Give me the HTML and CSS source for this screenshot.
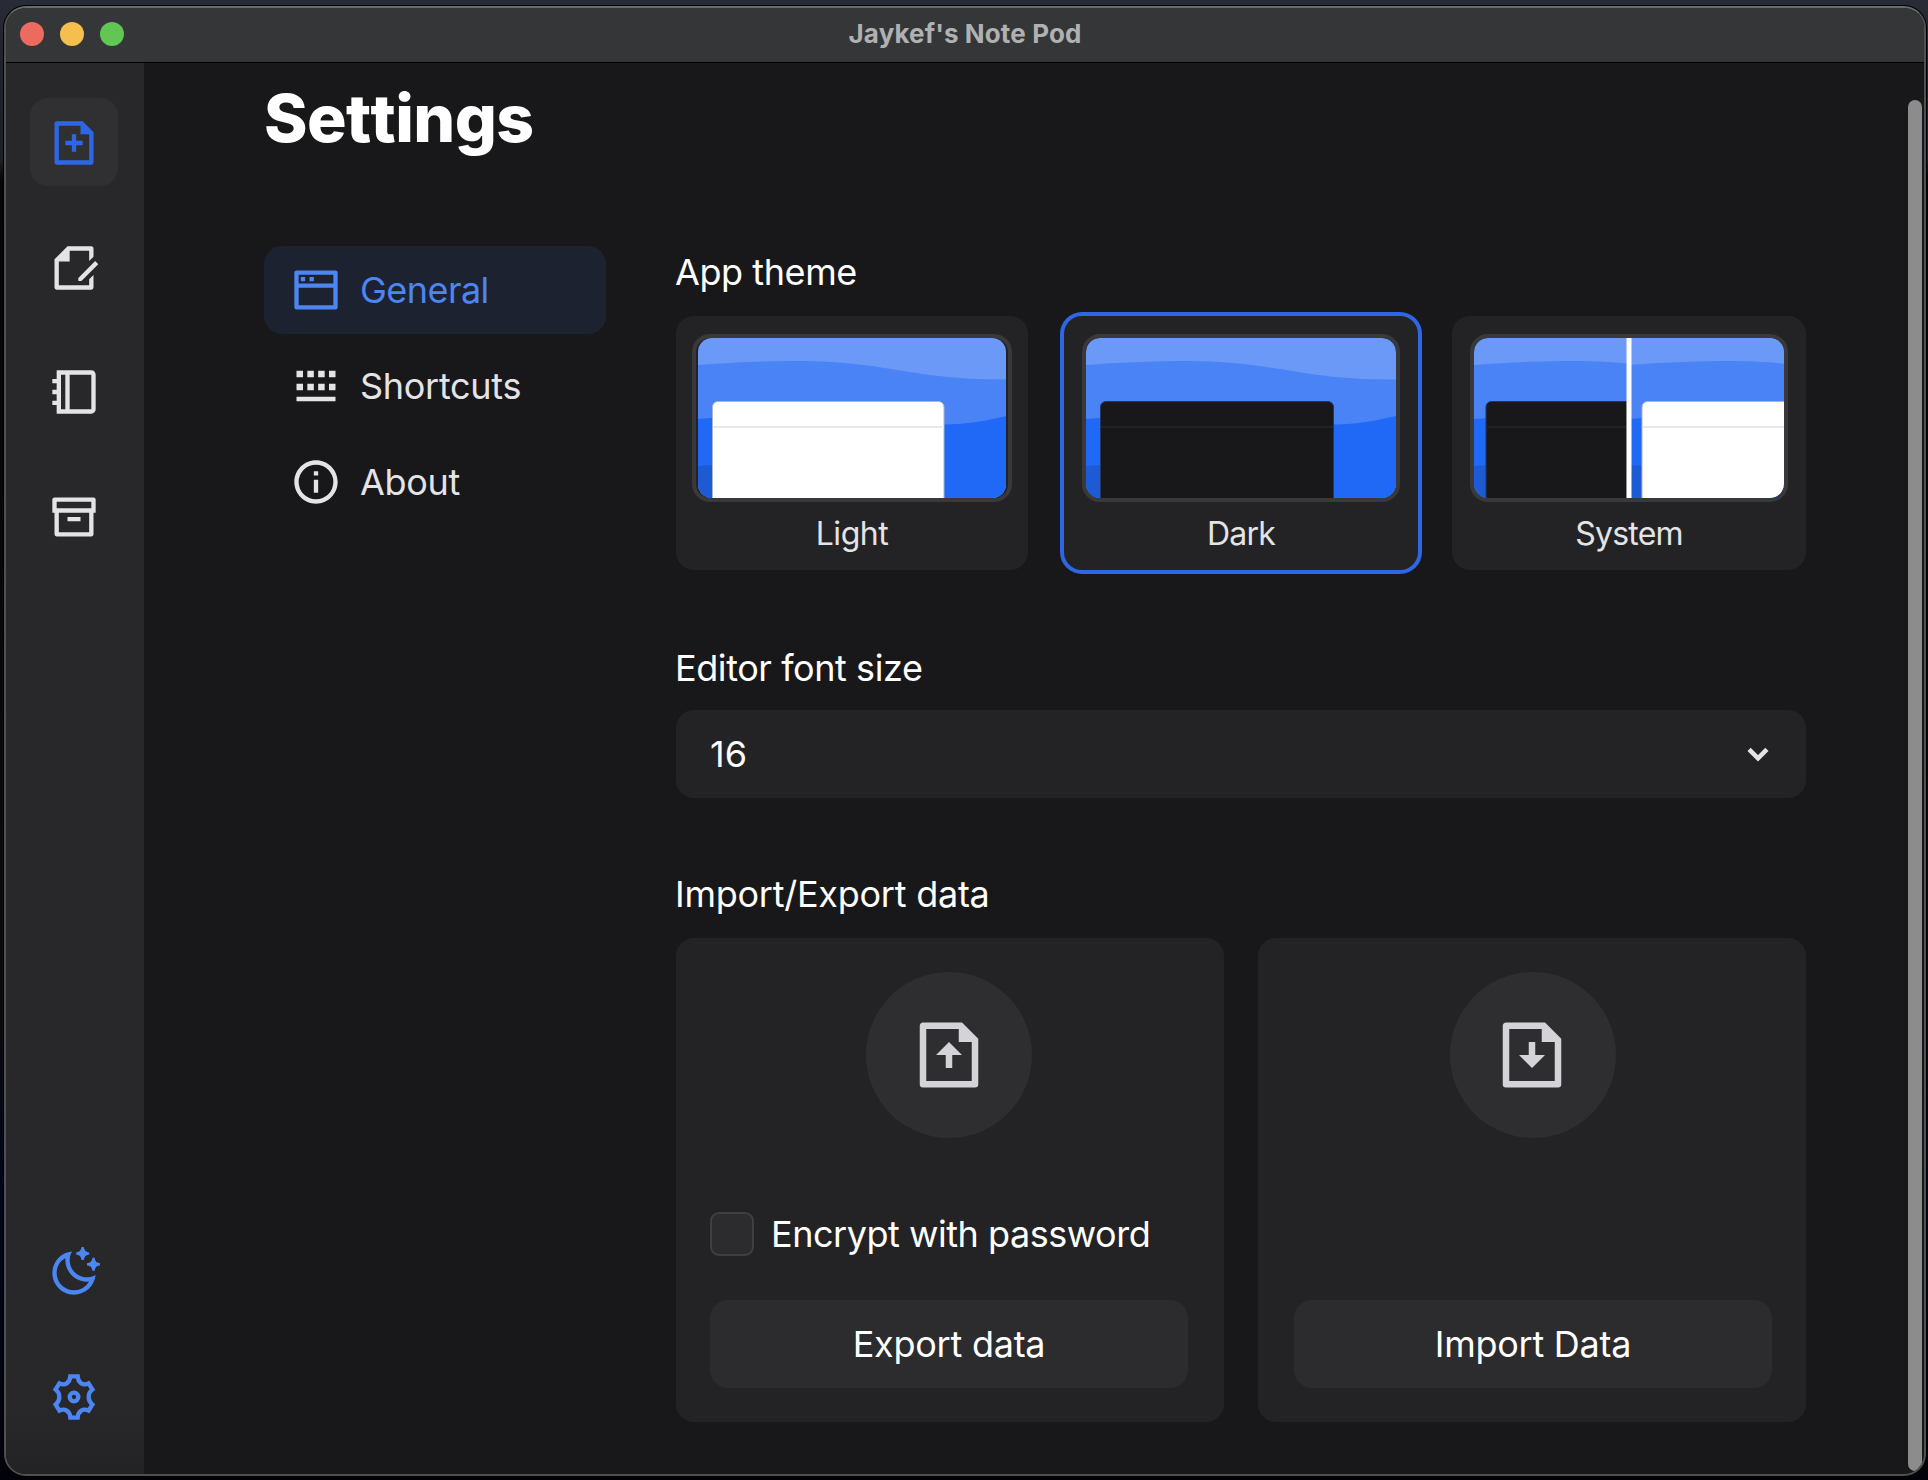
FILE: index.html
```html
<!DOCTYPE html>
<html lang="en">
<head>
<meta charset="utf-8">
<title>Jaykef's Note Pod</title>
<link rel="stylesheet" href="styles.css">
</head>
<body>
<svg width="0" height="0" class="defs">
  <defs>
    <symbol id="wall" viewBox="0 0 310 160" preserveAspectRatio="none">
      <rect width="310" height="160" fill="#6b99f7"/>
      <path d="M0 27C40 24 75 23 100 23C190 23 215 42 310 41.500V160H0Z" fill="#4a83f6"/>
      <path d="M0 81C60 75 160 86 245 86.500C275 86.500 292 82 310 78V160H0Z" fill="#2069f6"/>
      <path d="M0 128C20 126 40 127 60 132V160H0Z" fill="#1c5bd3"/>
    </symbol>
  </defs>
</svg>
<div class="window">
  <header class="titlebar">
    <div class="lights"><i class="light red"></i><i class="light yellow"></i><i class="light green"></i></div>
    <h1 class="app-title">Jaykef's Note Pod</h1>
  </header>
  <div class="body">
    <nav class="sidebar">
      <a class="side-btn active"><svg class="icon" viewBox="0 0 24 24"><path d="M15 4H5v16h14V8h-4V4zM3 2.992C3 2.444 3.447 2 3.999 2H16l5 5v13.993A1 1 0 0 1 20.007 22H3.993A1 1 0 0 1 3 21.008V2.992zM11 11V8h2v3h3v2h-3v3h-2v-3H8v-2h3z"/></svg></a>
      <a class="side-btn"><svg class="icon" viewBox="0 0 24 24"><path d="M20 2c.552 0 1 .448 1 1v3.757l-2 2V4h-9v5H5v11h14v-2.757l2-2v5.765a.993.993 0 0 1-.993.992H3.993A1 1 0 0 1 3 20.993V8l6.003-6H20zm1.778 6.808l1.414 1.414L15.414 18l-1.416-.002.002-1.412 7.778-7.778z"/></svg></a>
      <a class="side-btn"><svg class="icon" viewBox="0 0 24 24"><path d="M4 2h16.005C21.107 2 22 2.898 22 3.990v16.020c0 1.099-.893 1.990-1.995 1.990H4v-4H2v-2h2v-3H2v-2h2V8H2V6h2V2zm4 2H6v16h2V4zm2 16h10V4H10v16z"/></svg></a>
      <a class="side-btn"><svg class="icon" viewBox="0 0 24 24"><path d="M3 10H2V4.003C2 3.449 2.455 3 2.992 3h18.016A.990.990 0 0 1 22 4.003V10h-1v10.001a.996.996 0 0 1-.993.999H3.993A.996.996 0 0 1 3 20.001V10zm16 0H5v9h14v-9zM4 5v3h16V5H4zm5 7h6v2H9v-2z"/></svg></a>
      <span class="spacer"></span>
      <a class="side-btn blue"><svg class="icon" viewBox="0 0 24 24"><path d="M10 6a8 8 0 0 0 11.955 6.956C21.474 18.030 17.200 22 12 22 6.477 22 2 17.523 2 12c0-5.200 3.970-9.474 9.044-9.955A7.963 7.963 0 0 0 10 6zm-6 6a8 8 0 0 0 8 8 8.006 8.006 0 0 0 6.957-4.045c-.316.030-.636.045-.957.045-5.523 0-10-4.477-10-10 0-.321.015-.640.045-.957A8.006 8.006 0 0 0 4 12zm14.164-9.709L19 2.500v1l-.836.209a2 2 0 0 0-1.455 1.455L16.500 6h-1l-.209-.836a2 2 0 0 0-1.455-1.455L13 3.500v-1l.836-.209A2 2 0 0 0 15.290.836L15.500 0h1l.209.836a2 2 0 0 0 1.455 1.455zm5 5L24 7.500v1l-.836.209a2 2 0 0 0-1.455 1.455L21.500 11h-1l-.209-.836a2 2 0 0 0-1.455-1.455L18 8.500v-1l.836-.209a2 2 0 0 0 1.455-1.455L20.500 5h1l.209.836a2 2 0 0 0 1.455 1.455z"/></svg></a>
      <a class="side-btn blue"><svg class="icon" viewBox="0 0 24 24"><path d="M10.300 2.500H13.700C13.900 5.500 16.200 6.900 18.700 5.700L20.500 8.500C18.200 10.300 18.200 13.700 20.500 15.500L18.700 18.300C16.200 17.100 13.900 18.500 13.700 21.500H10.300C10.100 18.500 7.800 17.100 5.300 18.300L3.500 15.500C5.800 13.700 5.800 10.300 3.500 8.500L5.300 5.700C7.800 6.900 10.100 5.500 10.300 2.500Z" class="line"/><circle cx="12" cy="12" r="2" class="line"/></svg></a>
    </nav>
    <main class="content">
      <h2 class="page-title">Settings</h2>
      <div class="columns">
        <nav class="tabs">
          <a class="tab selected"><svg class="icon" viewBox="0 0 24 24"><path d="M21 3a1 1 0 0 1 1 1v16a1 1 0 0 1-1 1H3a1 1 0 0 1-1-1V4a1 1 0 0 1 1-1h18zm-1 8H4v8h16v-8zm0-6H4v4h16V5zM5 6h2v2H5V6zm4 0h2v2H9V6z"/></svg><span class="tab-general">General</span></a>
          <a class="tab"><svg class="icon" viewBox="0 0 24 24"><path d="M3 17h18v2H3v-2zm0-6h3v3H3v-3zm5 0h3v3H8v-3zM3 5h3v3H3V5zm10 0h3v3h-3V5zm5 0h3v3h-3V5zm-5 6h3v3h-3v-3zm5 0h3v3h-3v-3zM8 5h3v3H8V5z"/></svg>Shortcuts</a>
          <a class="tab"><svg class="icon" viewBox="0 0 24 24"><path d="M12 22C6.477 22 2 17.523 2 12S6.477 2 12 2s10 4.477 10 10-4.477 10-10 10zm0-2a8 8 0 1 0 0-16 8 8 0 0 0 0 16zM11 7h2v2h-2V7zm0 4h2v6h-2v-6z"/></svg>About</a>
        </nav>
        <div class="panel">
          <section class="theme-section">
            <h3 class="label">App theme</h3>
            <div class="themes">
              <div class="theme light-theme">
                <div class="frame inset"><svg class="preview" viewBox="0 0 308 160" preserveAspectRatio="none"><use href="#wall" width="308" height="160"/><path d="M14.500 160V69a5.500 5.500 0 0 1 5.500-5.500H240.500a5.500 5.500 0 0 1 5.500 5.500V160" fill="#fff" stroke="#a9b6cf" stroke-width="1"/><path d="M15 89H246" stroke="#e9e9e9" stroke-width="2"/></svg></div>
                <span>Light</span>
              </div>
              <div class="theme chosen">
                <div class="frame"><svg class="preview" viewBox="0 0 310 160" preserveAspectRatio="none"><use href="#wall" width="310" height="160"/><path d="M14.500 160V69a5.500 5.500 0 0 1 5.500-5.500H242a5.500 5.500 0 0 1 5.500 5.500V160" fill="#18181a" stroke="#27365a" stroke-width="1"/><path d="M15 89H247" stroke="#232325" stroke-width="2"/></svg></div>
                <span>Dark</span>
              </div>
              <div class="theme">
                <div class="frame"><svg class="preview" viewBox="0 0 310 160" preserveAspectRatio="none"><use href="#wall" width="310" height="160"/><path d="M12 160V69a5.500 5.500 0 0 1 5.500-5.500H153V160" fill="#18181a" stroke="#27365a" stroke-width="1"/><path d="M12 89H153" stroke="#232325" stroke-width="2"/><svg x="155" width="155" height="160"><use href="#wall" width="310" height="160"/><path d="M13 160V69a5.500 5.500 0 0 1 5.500-5.500H160V160" fill="#fff" stroke="#a9b6cf" stroke-width="1"/><path d="M13.500 89H155" stroke="#e9e9e9" stroke-width="2"/></svg><path d="M155 0V160" stroke="#fff" stroke-width="5"/></svg></div>
                <span>System</span>
              </div>
            </div>
          </section>
          <section class="font-section">
            <h3 class="label">Editor font size</h3>
            <div class="select"><span>16</span><svg class="chevron" viewBox="0 0 24 24"><path d="M3.100 7.400L12 16.300L20.900 7.400"/></svg></div>
          </section>
          <section class="data-section">
            <h3 class="label data-label">Import/Export data</h3>
            <div class="cards">
              <div class="card export">
                <div class="disc"><svg class="doc" viewBox="0 0 24 24"><path d="M15 4H5v16h14V8h-4V4zM3 2.992C3 2.444 3.447 2 3.999 2H16l5 5v13.993A1 1 0 0 1 20.007 22H3.993A1 1 0 0 1 3 21.008V2.992zM13 12v4h-2v-4H8l4-4 4 4h-3z"/></svg></div>
                <label class="check"><i class="box"></i>Encrypt with password</label>
                <div class="button">Export data</div>
              </div>
              <div class="card import">
                <div class="disc"><svg class="doc" viewBox="0 0 24 24"><path d="M15 4H5v16h14V8h-4V4zM3 2.992C3 2.444 3.447 2 3.999 2H16l5 5v13.993A1 1 0 0 1 20.007 22H3.993A1 1 0 0 1 3 21.008V2.992zM13 12h3l-4 4-4-4h3V8h2v4z"/></svg></div>
                <div class="button">Import Data</div>
              </div>
            </div>
          </section>
        </div>
      </div>
    </main>
    <div class="scroll"><div class="thumb"></div></div>
  </div>
</div>
</body>
</html>
```

FILE: styles.css
```css
* { box-sizing: border-box; }
body {
  margin: 0;
  width: 1928px;
  height: 1480px;
  padding: 6px 2px 4px 4px;
  overflow: hidden;
  background: linear-gradient(#292b36 0, #20232b 60px, #1c2024 160px, #050505 180px, #0a0a0c 1000px, #020617 1180px, #02030a 1480px);
  font-family: Inter, "Liberation Sans", sans-serif;
  color: #fff;
}
h1, h2, h3 { margin: 0; }
.defs { position: absolute; }
.window {
  width: 1922px;
  height: 1470px;
  border: 2px solid #505052;
  border-top-color: #6a6b6e;
  border-radius: 22px;
  overflow: hidden;
  box-shadow: 0 0 0 1px #000;
  background: #18181a;
  display: flex;
  flex-direction: column;
}
.titlebar {
  height: 55px;
  flex: none;
  background: #353638;
  border-bottom: 1px solid #000;
  display: grid;
  grid-template-columns: 1fr auto 1fr;
  align-items: center;
}
.lights { display: flex; gap: 16px; padding: 0 0 2px 14px; }
.light { width: 24px; height: 24px; border-radius: 50%; }
.red { background: #ed6a5f; }
.yellow { background: #f5bf50; }
.green { background: #62c655; }
.app-title { font-size: 26px; line-height: 30px; font-weight: 700; color: #b0b1b2; padding-bottom: 3px; letter-spacing: 0.12px; }
.body { flex: 1; display: flex; min-height: 0; }
.sidebar {
  width: 138px;
  flex: none;
  background: linear-gradient(#28282a 95%, #232325);
  display: flex;
  flex-direction: column;
  align-items: center;
  padding: 35px 2px 34px 0;
  gap: 36.5px;
}
.side-btn {
  width: 88px;
  height: 88px;
  border-radius: 18px;
  padding-top: 2px;
  display: flex;
  align-items: center;
  justify-content: center;
  color: #e4e4e7;
}
.side-btn.active { background: #303032; color: #2f66e6; }
.side-btn.blue, .selected { color: #4c86f2; }
.spacer { flex: 1; }
.icon { width: 52px; height: 52px; fill: currentColor; flex: none; }
.line { fill: none; stroke: currentColor; stroke-width: 2; }
.content { width: 1764px; flex: none; padding: 19px 102px 0 120px; }
.page-title { font-size: 66px; line-height: 72px; font-weight: 800; font-kerning: none; font-feature-settings: "calt" 0; letter-spacing: -0.6px; }
.columns { display: flex; gap: 70px; padding-top: 92px; }
.tabs { width: 342px; flex: none; display: flex; flex-direction: column; gap: 8px; }
.tab {
  height: 88px;
  border-radius: 18px;
  padding: 0 0 1px 26px;
  display: flex;
  align-items: center;
  gap: 18px;
  font-size: 36px;
  letter-spacing: -0.3px;
  color: #e4e4e7;
}
.tab-general { letter-spacing: -0.55px; }
.tab.selected { background: #1d2230; color: #4c86f2; }
.panel { width: 1130px; display: flex; flex-direction: column; }
.font-section { padding-top: 72px; }
.data-section { padding-top: 70px; }
.label { font-size: 36px; line-height: 52px; font-weight: 400; letter-spacing: -0.42px; margin-left: -1px; }
.data-label { letter-spacing: -0.25px; }
.themes { display: flex; padding-top: 18px; }
.theme {
  width: 354px;
  height: 254px;
  border-radius: 18px;
  background: #232325;
  padding: 18px 18px 0;
  display: flex;
  flex-direction: column;
  align-items: center;
  font-size: 32px;
  line-height: 46px;
  letter-spacing: -0.75px;
  color: #e4e4e7;
  gap: 9px;
}
.light-theme { width: 352px; padding: 18px 16px 0; letter-spacing: -0.45px; }
.chosen { margin: 0 34px 0 36px; box-shadow: 0 0 0 4px #2f66e6; }
.frame { width: 100%; height: 168px; border: 4px solid #39393b; border-radius: 18px; overflow: hidden; }
.inset { padding: 0 2px; }
.preview { display: block; width: 100%; height: 160px; border-radius: 14px; }
.select {
  height: 88px;
  margin-top: 16px;
  border-radius: 18px;
  background: #232325;
  padding: 0 36px 0 34px;
  display: flex;
  align-items: center;
  justify-content: space-between;
  font-size: 36px;
}
.chevron { width: 24px; height: 24px; fill: none; stroke: #e4e4e7; stroke-width: 4.6; }
.cards { display: grid; grid-template-columns: 548px 548px; justify-content: space-between; padding-top: 18px; }
.card {
  height: 484px;
  border-radius: 18px;
  background: #232325;
  display: flex;
  flex-direction: column;
  align-items: center;
}
.export { padding: 34px 36px 34px 34px; }
.import { padding: 34px 34px 34px 36px; }
.import .doc { margin-right: 2px; }
.disc { width: 166px; height: 166px; flex: none; border-radius: 50%; background: #2e2e30; display: flex; align-items: center; justify-content: center; }
.doc { width: 78px; height: 78px; fill: #d4d4d8; }
.check { align-self: flex-start; display: flex; align-items: center; gap: 17px; height: 44px; margin-top: 74px; font-size: 36px; letter-spacing: -0.47px; white-space: nowrap; }
.box { width: 44px; height: 44px; border-radius: 9px; border: 2px solid #3f3f42; background: #2c2c2e; }
.button { width: 100%; height: 88px; margin-top: auto; border-radius: 18px; background: #2c2c2e; display: flex; align-items: center; justify-content: center; font-size: 36px; letter-spacing: -0.25px; }
.scroll { flex: 1; padding-top: 37px; }
.thumb { width: 14px; height: 1371px; border-radius: 7px; background: #8c8c8c; }
```
